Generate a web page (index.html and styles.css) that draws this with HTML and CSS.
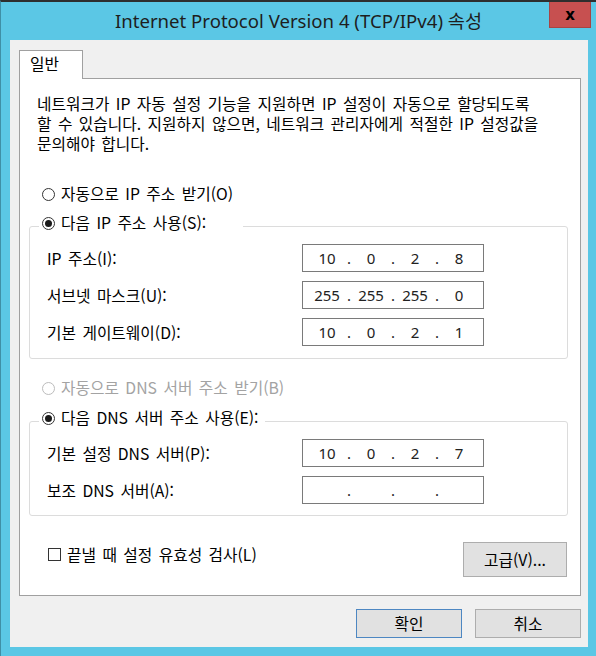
FILE: index.html
```html
<!DOCTYPE html>
<html lang="ko">
<head>
  <meta charset="UTF-8">
  <meta name="viewport" content="width=device-width, initial-scale=1.0">
  <title>Internet Protocol Version 4 (TCP/IPv4) 속성</title>
  <link rel="stylesheet" href="styles.css">
</head>
<body>
  <div class="window">
    <div class="titlebar">
      <span></span>
      <h1 class="title">Internet Protocol Version 4 (TCP/IPv4) 속성</h1>
      <button class="close">x</button>
    </div>

    <div class="client">
      <div class="tab">일반</div>
      <div class="panel">
        <p class="intro">네트워크가 IP 자동 설정 기능을 지원하면 IP 설정이 자동으로 할당되도록<br>할 수 있습니다. 지원하지 않으면, 네트워크 관리자에게 적절한 IP 설정값을<br>문의해야 합니다.</p>

        <label class="radio first"><span class="circle"></span>자동으로 IP 주소 받기(O)</label>

        <fieldset class="group">
          <legend><label class="radio"><span class="circle checked"></span>다음 IP 주소 사용(S):</label></legend>
          <div class="row">
            <span>IP 주소(I):</span>
            <div class="ip"><span>10</span><i>.</i><span>0</span><i>.</i><span>2</span><i>.</i><span>8</span></div>
          </div>
          <div class="row">
            <span>서브넷 마스크(U):</span>
            <div class="ip"><span>255</span><i>.</i><span>255</span><i>.</i><span>255</span><i>.</i><span>0</span></div>
          </div>
          <div class="row">
            <span>기본 게이트웨이(D):</span>
            <div class="ip"><span>10</span><i>.</i><span>0</span><i>.</i><span>2</span><i>.</i><span>1</span></div>
          </div>
        </fieldset>

        <label class="radio second disabled"><span class="circle"></span>자동으로 DNS 서버 주소 받기(B)</label>

        <fieldset class="group dns">
          <legend><label class="radio"><span class="circle checked"></span>다음 DNS 서버 주소 사용(E):</label></legend>
          <div class="row">
            <span>기본 설정 DNS 서버(P):</span>
            <div class="ip"><span>10</span><i>.</i><span>0</span><i>.</i><span>2</span><i>.</i><span>7</span></div>
          </div>
          <div class="row">
            <span>보조 DNS 서버(A):</span>
            <div class="ip"><span></span><i>.</i><span></span><i>.</i><span></span><i>.</i><span></span></div>
          </div>
        </fieldset>

        <div class="panel-bottom">
          <label class="check"><span class="box"></span>끝낼 때 설정 유효성 검사(L)</label>
          <button class="btn advanced">고급(V)...</button>
        </div>
      </div>

      <div class="footer">
        <button class="btn default">확인</button>
        <button class="btn">취소</button>
      </div>
    </div>
  </div>
</body>
</html>
```

FILE: styles.css
```css
* {
  box-sizing: border-box;
}
body {
  margin: 0;
  font-family: "Noto Sans CJK KR", "Noto Sans", sans-serif;
  font-size: 15.75px;
  word-spacing: 2px;
  color: #000;
}
.window {
  width: 596px;
  height: 656px;
  background: #5bc7e5;
  border-top: 2px solid #2e2e2e;
  border-left: 1px solid #3f8fa6;
  display: flex;
  flex-direction: column;
}

/* title bar */
.titlebar {
  height: 38px;
  display: grid;
  grid-template-columns: 1fr auto 1fr;
}
.title {
  margin: 0;
  font-family: "Noto Sans", "Noto Sans CJK KR", sans-serif;
  font-size: 18.6px;
  font-weight: normal;
  line-height: 38px;
  word-spacing: 0;
  white-space: nowrap;
  color: #1e1e1e;
}
.close {
  justify-self: end;
  width: 42px;
  height: 26px;
  margin-right: 5px;
  padding: 0;
  background: #c75050;
  border: 1px solid #a84444;
  border-top: none;
  font-family: "DejaVu Sans", sans-serif;
  font-size: 15px;
  font-weight: bold;
  line-height: 22px;
  color: #000;
}

/* client area */
.client {
  flex: 1;
  margin: 0 8px 9px 9px;
  padding: 10px 7px 9px 9px;
  background: #f0f0f0;
  display: flex;
  flex-direction: column;
}
.tab {
  position: relative;
  z-index: 1;
  width: 64px;
  height: 29px;
  margin-bottom: -1px;
  padding-left: 10px;
  background: #fff;
  border: 1px solid #a0a0a0;
  border-bottom: none;
  line-height: 26px;
}
.panel {
  flex: 1;
  background: #fff;
  border: 1px solid #a0a0a0;
  display: flex;
  flex-direction: column;
}
.intro {
  margin: 15px 0 0 17px;
  line-height: 20px;
  white-space: nowrap;
}

/* radios and checkbox */
.radio {
  display: flex;
  align-items: center;
  gap: 6px;
  height: 20px;
  line-height: 20px;
  white-space: nowrap;
}
.radio.first {
  margin: 30px 0 0 22px;
}
.radio.second {
  margin: 19px 0 0 22px;
}
.radio.disabled {
  color: #a3a3a3;
}
.circle {
  width: 13px;
  height: 13px;
  flex: none;
  border: 1px solid #333;
  border-radius: 50%;
  background: #fff;
  display: flex;
  align-items: center;
  justify-content: center;
}
.circle.checked::after {
  content: "";
  width: 7px;
  height: 7px;
  border-radius: 50%;
  background: #1a1a1a;
}
.disabled .circle {
  border-color: #bcbcbc;
}
.check {
  display: flex;
  align-items: center;
  gap: 6px;
  height: 20px;
  margin: 2px 0 0 28px;
}
.box {
  width: 13px;
  height: 13px;
  border: 1px solid #333;
  background: #fff;
}

/* group boxes */
.group {
  margin: 9px 12px 0 9px;
  padding: 0 83px 12px 17px;
  border: 1px solid #dcdcdc;
  border-radius: 3px;
  display: flex;
  flex-direction: column;
  gap: 9px;
  min-width: 0;
}
.group.dns {
  margin-top: 10px;
  padding-bottom: 11px;
}
.group legend {
  width: 204px;
  margin-left: -8px;
  padding: 0 0 6px 3px;
}
.group.dns legend {
  width: auto;
  padding-right: 6px;
}
.row {
  display: flex;
  justify-content: space-between;
  align-items: center;
  height: 28px;
}
.row:first-of-type {
  margin-top: 5px;
}
.ip {
  width: 182px;
  height: 28px;
  padding-left: 6px;
  border: 1px solid #7a7a7a;
  background: #fff;
  display: grid;
  grid-template-columns: 36px 8px 36px 8px 36px 8px 36px;
  align-items: center;
  text-align: center;
  font-family: "Noto Sans", sans-serif;
  font-size: 15px;
  word-spacing: 0;
  color: #222;
}
.ip i {
  font-style: normal;
}

.panel-bottom {
  margin: 26px 13px 0 0;
  display: flex;
  justify-content: space-between;
  align-items: flex-start;
}

/* buttons */
.btn {
  width: 106px;
  height: 29px;
  padding: 0;
  background: #e1e1e1;
  border: 1px solid #adadad;
  font-family: "Noto Sans CJK KR", "Noto Sans", sans-serif;
  font-size: 15.75px;
  color: #000;
}
.btn.advanced {
  width: 104px;
  height: 35px;
}
.btn.default {
  border-color: #4d87c2;
}
.footer {
  margin-top: 13px;
  display: flex;
  justify-content: flex-end;
  gap: 13px;
}
```
